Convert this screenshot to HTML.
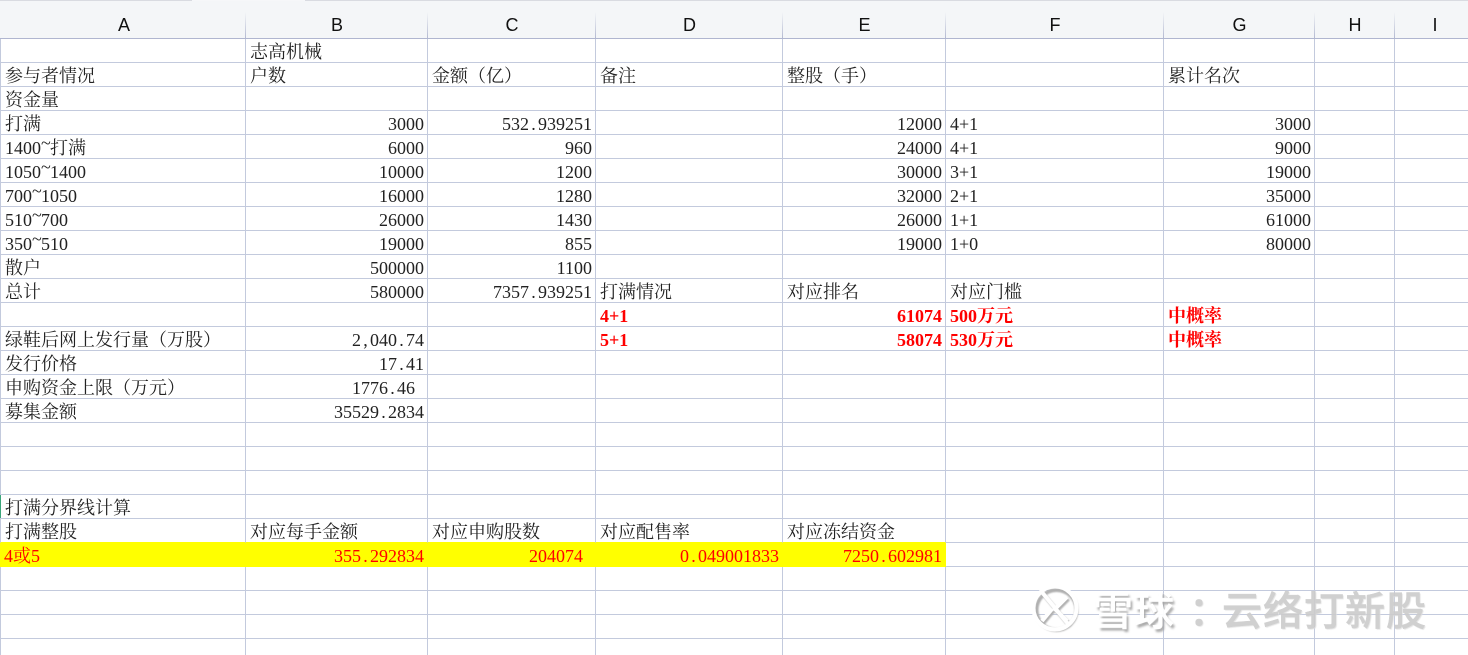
<!DOCTYPE html>
<html><head><meta charset="utf-8"><style>
html,body{margin:0;padding:0;background:#fff;width:1468px;height:655px;overflow:hidden}
#wrap{position:absolute;left:0;top:0;width:1468px;height:655px;overflow:hidden}
#h{position:absolute;left:0;top:1px;height:37px;width:1468px;background:#f4f6f8}
#top{position:absolute;left:0;top:0;width:1468px;height:1px;background:#d9dbe1}
#tab{position:absolute;left:192px;top:0;width:113px;height:1px;background:#f6f7f9}
#h div{position:absolute;top:0;height:37px;text-align:center;font:18px/48px "Liberation Sans",sans-serif;color:#111;box-sizing:border-box}
#h i{position:absolute;top:11px;width:1px;height:26px;background:linear-gradient(#f4f6f8,#b4bad2)}
#hl{position:absolute;left:0;top:38px;width:1468px;height:1px;background:#b0b6d0}
table{position:absolute;left:0;top:39px;border-collapse:separate;border-spacing:0;table-layout:fixed;width:1500px;font:18px/19px "Liberation Serif","Noto Serif CJK SC",serif;color:#222}
td{height:24px;box-sizing:border-box;padding:4px 3px 0 4px;border-right:1px solid #c3cadd;border-bottom:1px solid #c3cadd;white-space:pre;overflow:hidden;vertical-align:top}
td:first-child{border-left:1px solid #c3cadd}
.r{text-align:right}
.d{display:inline-block;width:9px;text-align:center}
.t{display:inline-block;width:9px;text-align:center;position:relative;top:-5px}
.b{color:#f00;font-weight:bold}
.y td{background:#ff0;color:#f00;border-color:#ff0}
.p td{border-bottom-color:#ff0}
.p td:nth-child(n+6){border-bottom-color:#c3cadd}
.y td:nth-child(n+6){background:#fff;border-color:#c3cadd}
.y td:first-child{padding-left:3px}
#g{position:absolute;left:0;top:495px;width:1px;height:23px;background:#3aa57a}
.w{position:absolute;top:584px;font:500 40px/48px "Noto Sans CJK SC",sans-serif;white-space:pre;letter-spacing:1px;-webkit-text-stroke:.5px currentColor}
.a{color:#fff;text-shadow:2px 3px 2px #a6a6a6;opacity:.95}
.c{color:#ccc;text-shadow:1px 1px 1px #ddd;opacity:.9}
</style></head><body><div id="wrap">
<div id="top"></div><div id="tab"></div>
<div id="h">
<div style="left:0;width:248px">A</div><div style="left:246px;width:182px">B</div><div style="left:428px;width:168px">C</div><div style="left:596px;width:187px">D</div><div style="left:783px;width:163px">E</div><div style="left:946px;width:218px">F</div><div style="left:1164px;width:151px">G</div><div style="left:1315px;width:80px">H</div><div style="left:1395px;width:80px">I</div>
<i style="left:245px"></i><i style="left:427px"></i><i style="left:595px"></i><i style="left:782px"></i><i style="left:945px"></i><i style="left:1163px"></i><i style="left:1314px"></i><i style="left:1394px"></i>
</div><div id="hl"></div>
<table>
<colgroup><col style="width:246px"><col style="width:182px"><col style="width:168px"><col style="width:187px"><col style="width:163px"><col style="width:218px"><col style="width:151px"><col style="width:80px"><col style="width:105px"></colgroup>
<tr><td></td><td>志高机械</td><td></td><td></td><td></td><td></td><td></td><td></td><td></td></tr>
<tr><td>参与者情况</td><td>户数</td><td>金额（亿）</td><td>备注</td><td>整股（手）</td><td></td><td>累计名次</td><td></td><td></td></tr>
<tr><td>资金量</td><td></td><td></td><td></td><td></td><td></td><td></td><td></td><td></td></tr>
<tr><td>打满</td><td class="r">3000</td><td class="r">532<span class="d">.</span>939251</td><td></td><td class="r">12000</td><td>4+1</td><td class="r">3000</td><td></td><td></td></tr>
<tr><td>1400<span class="t">~</span>打满</td><td class="r">6000</td><td class="r">960</td><td></td><td class="r">24000</td><td>4+1</td><td class="r">9000</td><td></td><td></td></tr>
<tr><td>1050<span class="t">~</span>1400</td><td class="r">10000</td><td class="r">1200</td><td></td><td class="r">30000</td><td>3+1</td><td class="r">19000</td><td></td><td></td></tr>
<tr><td>700<span class="t">~</span>1050</td><td class="r">16000</td><td class="r">1280</td><td></td><td class="r">32000</td><td>2+1</td><td class="r">35000</td><td></td><td></td></tr>
<tr><td>510<span class="t">~</span>700</td><td class="r">26000</td><td class="r">1430</td><td></td><td class="r">26000</td><td>1+1</td><td class="r">61000</td><td></td><td></td></tr>
<tr><td>350<span class="t">~</span>510</td><td class="r">19000</td><td class="r">855</td><td></td><td class="r">19000</td><td>1+0</td><td class="r">80000</td><td></td><td></td></tr>
<tr><td>散户</td><td class="r">500000</td><td class="r">1100</td><td></td><td></td><td></td><td></td><td></td><td></td></tr>
<tr><td>总计</td><td class="r">580000</td><td class="r">7357<span class="d">.</span>939251</td><td>打满情况</td><td>对应排名</td><td>对应门槛</td><td></td><td></td><td></td></tr>
<tr><td></td><td></td><td></td><td class="b">4+1</td><td class="b r">61074</td><td class="b">500万元</td><td class="b">中概率</td><td></td><td></td></tr>
<tr><td>绿鞋后网上发行量（万股）</td><td class="r">2<span class="d">,</span>040<span class="d">.</span>74</td><td></td><td class="b">5+1</td><td class="b r">58074</td><td class="b">530万元</td><td class="b">中概率</td><td></td><td></td></tr>
<tr><td>发行价格</td><td class="r">17<span class="d">.</span>41</td><td></td><td></td><td></td><td></td><td></td><td></td><td></td></tr>
<tr><td>申购资金上限（万元）</td><td class="r" style="padding-right:12px">1776<span class="d">.</span>46</td><td></td><td></td><td></td><td></td><td></td><td></td><td></td></tr>
<tr><td>募集金额</td><td class="r">35529<span class="d">.</span>2834</td><td></td><td></td><td></td><td></td><td></td><td></td><td></td></tr>
<tr><td></td><td></td><td></td><td></td><td></td><td></td><td></td><td></td><td></td></tr>
<tr><td></td><td></td><td></td><td></td><td></td><td></td><td></td><td></td><td></td></tr>
<tr><td></td><td></td><td></td><td></td><td></td><td></td><td></td><td></td><td></td></tr>
<tr><td>打满分界线计算</td><td></td><td></td><td></td><td></td><td></td><td></td><td></td><td></td></tr>
<tr class="p"><td>打满整股</td><td>对应每手金额</td><td>对应申购股数</td><td>对应配售率</td><td>对应冻结资金</td><td></td><td></td><td></td><td></td></tr>
<tr class="y"><td>4或5</td><td class="r">355<span class="d">.</span>292834</td><td class="r" style="padding-right:12px">204074</td><td class="r">0<span class="d">.</span>049001833</td><td class="r">7250<span class="d">.</span>602981</td><td></td><td></td><td></td><td></td></tr>
<tr><td></td><td></td><td></td><td></td><td></td><td></td><td></td><td></td><td></td></tr>
<tr><td></td><td></td><td></td><td></td><td></td><td></td><td></td><td></td><td></td></tr>
<tr><td></td><td></td><td></td><td></td><td></td><td></td><td></td><td></td><td></td></tr>
<tr><td></td><td></td><td></td><td></td><td></td><td></td><td></td><td></td><td></td></tr>
</table>
<div id="g"></div>
<svg style="position:absolute;left:1025px;top:578px" width="64" height="64" viewBox="0 0 64 64" fill="none">
<defs><filter id="s" x="-20%" y="-20%" width="140%" height="140%"><feGaussianBlur stdDeviation="0.8"/></filter></defs>
<g stroke="#b0b0b0" stroke-width="4" transform="translate(1.5 2)" filter="url(#s)"><circle cx="30" cy="30" r="20"/><path d="M16 13L44 47M42 19L30 31L42 43M17 43L27 31"/></g>
<g stroke="#fff" stroke-width="4"><circle cx="30" cy="30" r="21.5"/><path d="M16 13L44 47M42 19L30 31L42 43M17 43L27 31"/></g>
</svg>
<div class="w a" style="left:1093px">雪球</div>
<div class="w c" style="left:1189px">：</div>
<div class="w c" style="left:1222px">云络打新股</div>
</div></body></html>
